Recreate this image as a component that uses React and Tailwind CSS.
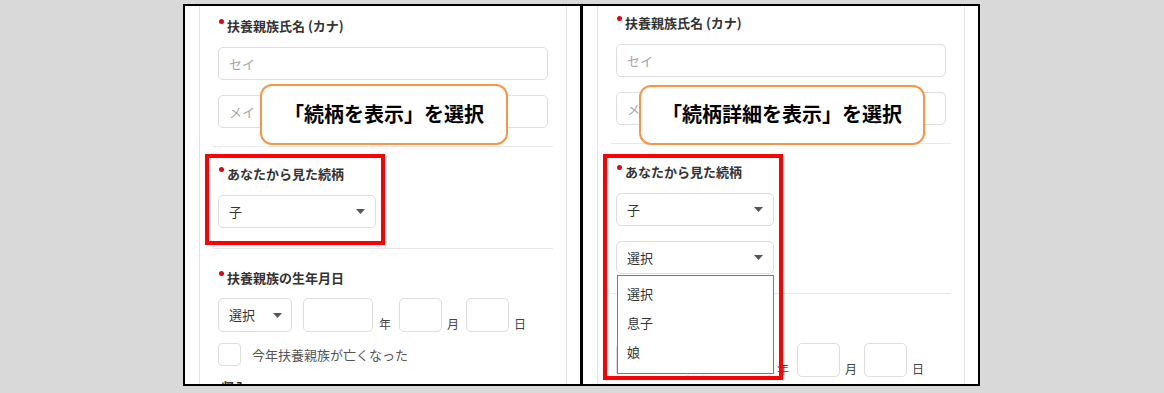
import React from "react";

const Arrow = () => (
  <svg width="9" height="5" viewBox="0 0 9 5" className="shrink-0">
    <path d="M0 0 L9 0 L4.5 5 Z" fill="#555" />
  </svg>
);

const Label = ({ children, className = "" }) => (
  <div className={"relative pl-[9px] text-[13px] leading-[16px] font-bold text-[#333] whitespace-nowrap " + className}>
    <span className="absolute left-[1px] top-[1px] w-[5px] h-[5px] rounded-full bg-[#e60012]" />
    {children}
  </div>
);

const Input = ({ placeholder, className = "" }) => (
  <div className={"h-[33px] border border-[#dedede] rounded-[5px] flex items-center px-[10px] text-[13px] text-[#a3a3a3] " + className}>
    {placeholder}
  </div>
);

const Select = ({ value, className = "", arrowPad = "pr-[10px]" }) => (
  <div className={"h-[33px] border border-[#dedede] rounded-[5px] flex items-center justify-between pl-[10px] text-[13px] text-[#333] bg-white " + arrowPad + " " + className}>
    <span>{value}</span>
    <Arrow />
  </div>
);

const Divider = ({ className = "" }) => (
  <div className={"h-px bg-[#e8e8e8] -mx-[5px] " + className} />
);

const DateRow = ({ className = "" }) => (
  <div className={"flex items-end h-[34px] " + className}>
    <Select value="選択" className="w-[74px] h-[34px]" arrowPad="pr-[9px]" />
    <div className="ml-[11px] w-[70px] h-[34px] border border-[#dedede] rounded-[5px]" />
    <span className="ml-[6px] text-[12px] leading-[16px] text-[#444]">年</span>
    <div className="ml-[8px] w-[43px] h-[34px] border border-[#dedede] rounded-[5px]" />
    <span className="ml-[5px] text-[12px] leading-[16px] text-[#444]">月</span>
    <div className="ml-[7px] w-[43px] h-[34px] border border-[#dedede] rounded-[5px]" />
    <span className="ml-[5px] text-[12px] leading-[16px] text-[#444]">日</span>
  </div>
);

const Card = ({ children, className = "" }) => (
  <div className="h-full overflow-hidden relative bg-white">
    <div className={"ml-[14px] w-[368px] h-full border-x border-[#e3e3e3] px-[18px] " + className}>
      {children}
    </div>
  </div>
);

export default function App() {
  return (
    <div className="w-[1164px] h-[393px] bg-[#d9d9d9] relative overflow-hidden pt-[4px] pl-[183px] font-['Noto_Sans_CJK_JP',sans-serif]">
      <div className="w-[797px] h-[382px] border-2 border-black flex bg-white">
        {/* Left panel */}
        <div className="w-[395px] h-full">
          <Card className="pt-[12px]">
            <Label>扶養親族氏名 (カナ)</Label>
            <Input placeholder="セイ" className="mt-[13px]" />
            <Input placeholder="メイ" className="mt-[15px]" />
            <Divider className="mt-[18px]" />
            <Label className="mt-[19px]">あなたから見た続柄</Label>
            <Select value="子" className="mt-[13px] w-[158px]" />
            <Divider className="mt-[20px]" />
            <Label className="mt-[21px]">扶養親族の生年月日</Label>
            <DateRow className="mt-[12px]" />
            <div className="mt-[11px] flex items-center">
              <div className="w-[23px] h-[23px] border border-[#dedede] rounded-[4px]" />
              <span className="ml-[11px] text-[13px] text-[#555]">今年扶養親族が亡くなった</span>
            </div>
            <div className="mt-[13px] pl-[3px] text-[13px] leading-[16px] font-bold text-[#333]">収入</div>
          </Card>
        </div>
        <div className="w-[3px] h-full bg-black" />
        {/* Right panel */}
        <div className="w-[395px] h-full">
          <Card className="pt-[9px]">
            <Label>扶養親族氏名 (カナ)</Label>
            <Input placeholder="セイ" className="mt-[13px]" />
            <Input placeholder="メイ" className="mt-[15px]" />
            <Divider className="mt-[18px]" />
            <Label className="mt-[20px]">あなたから見た続柄</Label>
            <Select value="子" className="mt-[13px] w-[158px]" />
            <div className="relative mt-[15px] w-[158px] z-10">
              <Select value="選択" className="w-[158px] h-[33px]" />
              <div className="absolute left-[1px] top-[34px] w-[157px] h-[99px] border border-[#7a7a7a] bg-white pt-[3px] text-[13px] text-[#333]">
                <div className="h-[29px] leading-[29px] pl-[9px]">選択</div>
                <div className="h-[29px] leading-[29px] pl-[9px]">息子</div>
                <div className="h-[29px] leading-[29px] pl-[9px]">娘</div>
              </div>
            </div>
            <Divider className="mt-[19px]" />
            <Label className="mt-[21px]">扶養親族の生年月日</Label>
            <DateRow className="mt-[12px]" />
          </Card>
        </div>
      </div>

      {/* Red highlight boxes */}
      <div className="absolute left-[205px] top-[154px] w-[180px] h-[91px] border-4 border-[#ff0000] z-20" />
      <div className="absolute left-[603px] top-[154px] w-[180px] h-[226px] border-4 border-[#ff0000] z-20" />

      {/* Callouts */}
      <div className="absolute left-[260px] top-[84px] w-[248px] h-[61px] border-2 border-[#f79646] rounded-[12px] bg-white flex items-center justify-center text-[20px] font-bold text-black pb-[2px] z-30">
        「続柄を表示」を選択
      </div>
      <div className="absolute left-[639px] top-[85px] w-[286px] h-[60px] border-2 border-[#f79646] rounded-[12px] bg-white flex items-center justify-center text-[20px] font-bold text-black pb-[2px] z-30">
        「続柄詳細を表示」を選択
      </div>
    </div>
  );
}
